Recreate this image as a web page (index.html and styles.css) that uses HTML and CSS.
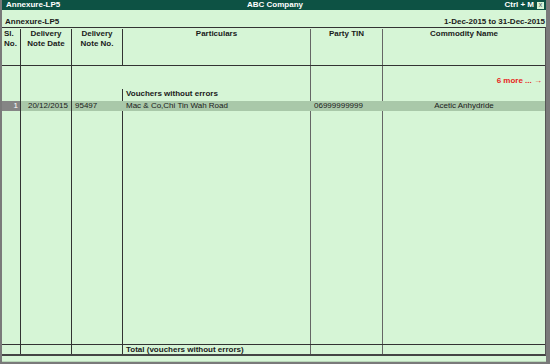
FILE: index.html
```html
<!DOCTYPE html>
<html lang="en">

<head>
  <meta charset="UTF-8">
  <title>Annexure-LP5</title>
  <link rel="stylesheet" href="styles.css">
</head>

<body>
  <div class="screen">
    <div class="titlebar">
      <span>Annexure-LP5</span>
      <span class="title-center">ABC Company</span>
      <span class="title-right">Ctrl + M <span class="close">x</span></span>
    </div>

    <div class="subhead">
      <span>Annexure-LP5</span>
      <span>1-Dec-2015 to 31-Dec-2015</span>
    </div>

    <div class="report">
      <!-- Column headings -->
      <div class="row head">
        <div class="cell">Sl.<br>No.</div>
        <div class="cell center">Delivery<br>Note Date</div>
        <div class="cell center">Delivery<br>Note No.</div>
        <div class="cell center">Particulars</div>
        <div class="cell center">Party TIN</div>
        <div class="cell center">Commodity Name</div>
      </div>

      <div class="row group">
        <div class="cell"></div>
        <div class="cell"></div>
        <div class="cell"></div>
        <div class="cell bold bottom">Vouchers without errors</div>
        <div class="cell"></div>
        <div class="cell more-cell"><span class="more">6 more ... &rarr;</span></div>
      </div>

      <div class="row line selected">
        <div class="cell sl">1</div>
        <div class="cell right">20/12/2015</div>
        <div class="cell">95497</div>
        <div class="cell">Mac &amp; Co,Chi Tin Wah Road</div>
        <div class="cell">06999999999</div>
        <div class="cell center">Acetic Anhydride</div>
      </div>

      <div class="row filler">
        <div class="cell"></div>
        <div class="cell"></div>
        <div class="cell"></div>
        <div class="cell"></div>
        <div class="cell"></div>
        <div class="cell"></div>
      </div>

      <div class="row total">
        <div class="cell"></div>
        <div class="cell"></div>
        <div class="cell"></div>
        <div class="cell bold">Total (vouchers without errors)</div>
        <div class="cell"></div>
        <div class="cell"></div>
      </div>
    </div>

    <div class="strip"></div>
  </div>
</body>

</html>
```

FILE: styles.css
```css
body {
  margin: 0;
  background: #7a7a7a;
  font-family: "Liberation Sans", Arial, sans-serif;
  font-size: 8px;
  color: #1a1a1a;
}

.screen {
  width: 550px;
  height: 364px;
  box-sizing: border-box;
  border-left: 2px solid #7a7a7a;
  border-right: 4px solid #7a7a7a;
  border-bottom: 2px solid #7a7a7a;
  background: #d6f5d6;
  display: flex;
  flex-direction: column;
}

.titlebar {
  height: 10px;
  background: #0d5244;
  color: #fff;
  font-weight: bold;
  display: grid;
  grid-template-columns: 1fr auto 1fr;
  align-items: center;
  padding: 0 2px 0 4px;
  line-height: 10px;
}

.title-right {
  justify-self: end;
  display: flex;
  align-items: center;
  gap: 3px;
}

.close {
  width: 7px;
  height: 7px;
  background: #d6f5d6;
  color: #555;
  font-size: 7px;
  line-height: 6px;
  text-align: center;
  font-weight: normal;
}

.subhead {
  height: 17px;
  display: flex;
  justify-content: space-between;
  align-items: flex-end;
  padding: 0 1px 0 3px;
  font-weight: bold;
  line-height: 10px;
}

.report {
  flex: 1;
  display: flex;
  flex-direction: column;
  border-top: 1px solid #333;
  border-right: 1px solid #555;
  border-bottom: 2px solid #444;
}

.row {
  display: grid;
  grid-template-columns: 18px 51px 51px 188px 72px 1fr;
}

.cell {
  border-left: 1px solid #333;
  padding: 0 3px;
  white-space: nowrap;
  overflow: hidden;
}

.cell:first-child {
  border-left: none;
  padding: 0 2px;
}

.cell:nth-child(5),
.cell:nth-child(6) {
  border-left-color: #666;
}

.center {
  text-align: center;
}

.right {
  text-align: right;
}

.bold {
  font-weight: bold;
}

.head {
  height: 36px;
  border-bottom: 1px solid #333;
  font-weight: bold;
  line-height: 10px;
  padding-top: 1px;
}

.group {
  height: 35px;
}

.bottom {
  align-self: end;
  line-height: 10px;
  padding-bottom: 2px;
}

.more-cell {
  text-align: right;
  padding-top: 10px;
}

.more {
  color: #e8231c;
  font-weight: bold;
}

.line {
  height: 10px;
  line-height: 10px;
}

.selected {
  background: #a9c8a9;
}

.selected .cell {
  border-left-color: #a9c8a9;
}

.selected .cell:nth-child(2),
.selected .cell:nth-child(3) {
  border-left-color: #333;
}

.selected .sl {
  background: #858585;
  color: #fff;
  text-align: right;
}

.filler {
  flex: 1;
}

.total {
  height: 9px;
  line-height: 9px;
  border-top: 1px solid #333;
}

.strip {
  height: 5px;
  border-bottom: 1px solid #b8d6b8;
}
```
